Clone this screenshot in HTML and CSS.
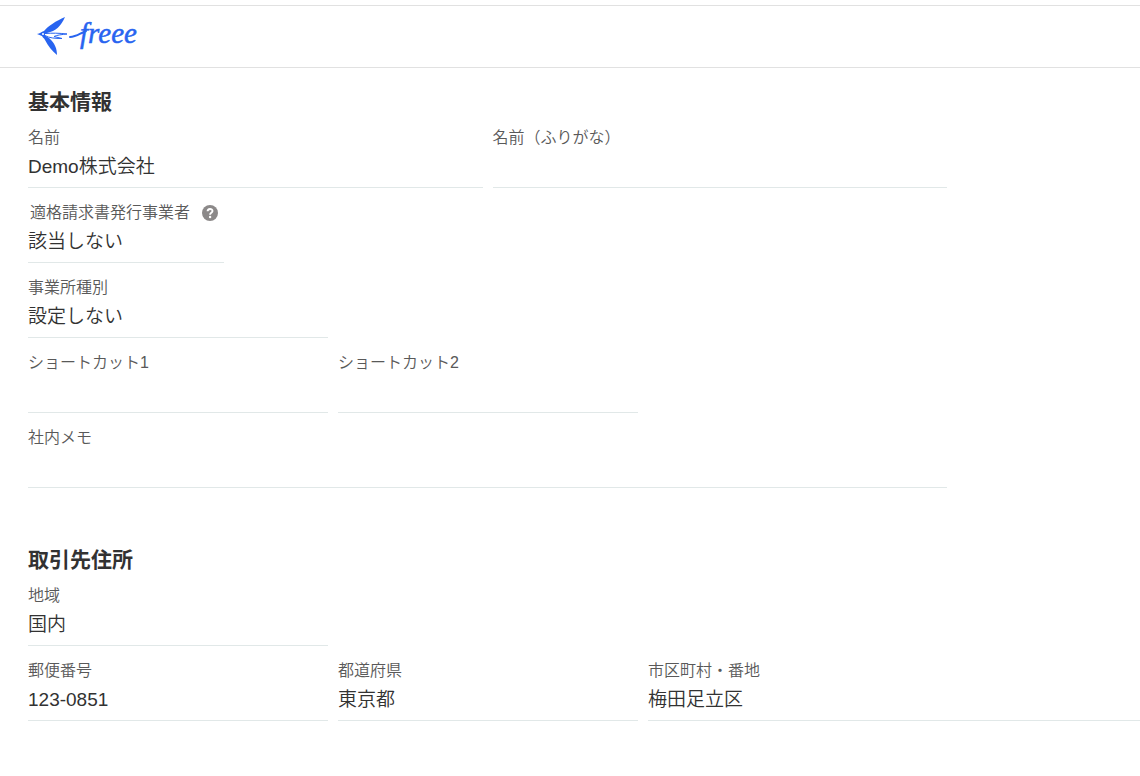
FILE: index.html
```html
<!DOCTYPE html>
<html lang="ja">
<head>
    <meta charset="UTF-8">
    <meta name="viewport" content="width=device-width, initial-scale=1.0">
    <title>freee</title>
    <link rel="stylesheet" href="styles.css">
</head>
<body>

    <header class="header">
        <a class="logo" href="#" aria-label="freee">
            <svg width="104" height="44" viewBox="36 14 104 44">
                <!-- swallow -->
                <path class="logo-fill" d="M65 17 C56 21 48 26 44 31 C41 31.5 40 34 37 34 L42 36 C43 38 44 38 45 40 C48 46 52 51 57 55 C57 49 55 43 49 38 L45 35.5 L47 33 C56 31 61 26 65 17 Z"/>
                <path class="logo-body" d="M45 33.5 C52 33 59 33 67 34 C62 34.5 57 35 54 36.5 L62 38.5 C55 38.5 49 38 45 35.5"/>
                <circle class="logo-gap" cx="43" cy="34" r="1"/>
                <!-- tail stroke that runs into the wordmark -->
                <path class="logo-line" d="M70 37 C76 37 79 34 86 31"/>
                <text class="logo-text" x="80" y="43">freee</text>
            </svg>
        </a>
    </header>

    <main class="main">
        <section class="section">
            <h2>基本情報</h2>
            <dl class="row">
                <div class="field">
                    <dt>名前</dt>
                    <dd>Demo株式会社</dd>
                </div>
                <div class="field">
                    <dt>名前（ふりがな）</dt>
                    <dd></dd>
                </div>
            </dl>
            <dl class="row">
                <div class="field small">
                    <dt class="with-help">適格請求書発行事業者
                        <button class="help" type="button" aria-label="ヘルプ">
                            <svg width="16" height="16" viewBox="0 0 16 16">
                                <circle cx="8" cy="8" r="8" fill="#8c8989"/>
                                <path d="M5.6 6.3 C5.6 3.2 10.5 3.2 10.5 6 C10.5 7.8 8.1 7.8 8.1 9.7" fill="none" stroke="#fff" stroke-width="1.9"/>
                                <circle cx="8.1" cy="12" r="1.2" fill="#fff"/>
                            </svg>
                        </button>
                    </dt>
                    <dd>該当しない</dd>
                </div>
            </dl>
            <dl class="row">
                <div class="field medium">
                    <dt>事業所種別</dt>
                    <dd>設定しない</dd>
                </div>
            </dl>
            <dl class="row">
                <div class="field medium">
                    <dt>ショートカット1</dt>
                    <dd></dd>
                </div>
                <div class="field medium">
                    <dt>ショートカット2</dt>
                    <dd></dd>
                </div>
            </dl>
            <dl class="row">
                <div class="field">
                    <dt>社内メモ</dt>
                    <dd></dd>
                </div>
            </dl>
        </section>

        <section class="section">
            <h2>取引先住所</h2>
            <dl class="row">
                <div class="field medium">
                    <dt>地域</dt>
                    <dd>国内</dd>
                </div>
            </dl>
            <dl class="row wide">
                <div class="field medium">
                    <dt>郵便番号</dt>
                    <dd>123-0851</dd>
                </div>
                <div class="field medium">
                    <dt>都道府県</dt>
                    <dd>東京都</dd>
                </div>
                <div class="field">
                    <dt>市区町村・番地</dt>
                    <dd>梅田足立区</dd>
                </div>
            </dl>
        </section>
    </main>

</body>
</html>
```
FILE: styles.css
```css
* { box-sizing: border-box; }
body { margin: 0; padding-top: 5px; background: #fff; color: #323232; font-family: "Liberation Sans", "Noto Sans CJK JP", sans-serif; font-weight: 350; }

.header { padding: 8px 36px 9px; border-top: 1px solid #e1e1e1; border-bottom: 1px solid #e1e1e1; }
.logo { display: block; width: 104px; }
.logo svg { display: block; }
.logo-fill { fill: #2864f0; }
.logo-body { fill: #fff; stroke: #2864f0; stroke-width: 1; }
.logo-gap { fill: #fff; }
.logo-line { fill: none; stroke: #2864f0; stroke-width: 2; stroke-linecap: round; }
.logo-text { fill: #2864f0; stroke: #2864f0; stroke-width: 0.5; font: italic 400 29px "Liberation Serif", serif; }

.main { padding: 21px 0 0 28px; }
.section + .section { padding-top: 46px; }
h2 { margin: 0 0 11px; font-size: 21px; line-height: 26px; font-weight: 700; }
.row { display: flex; gap: 10px; max-width: 919px; margin: 0 0 13px; }
.row.wide { max-width: none; }
.field { flex: 1; min-width: 0; padding-bottom: 4px; border-bottom: 1px solid #e1e8e8; }
.field.small { flex: 0 1 196px; }
.field.medium { flex: 0 1 300px; }
dt { height: 24px; font-size: 16px; line-height: 24px; color: #595959; white-space: nowrap; }
dd { min-height: 33px; margin: 0; font-size: 19px; line-height: 33px; }
.with-help { display: flex; align-items: center; gap: 12px; padding-left: 2px; }
.help { padding: 0; border: none; background: none; cursor: pointer; }
.help svg { display: block; }
```
